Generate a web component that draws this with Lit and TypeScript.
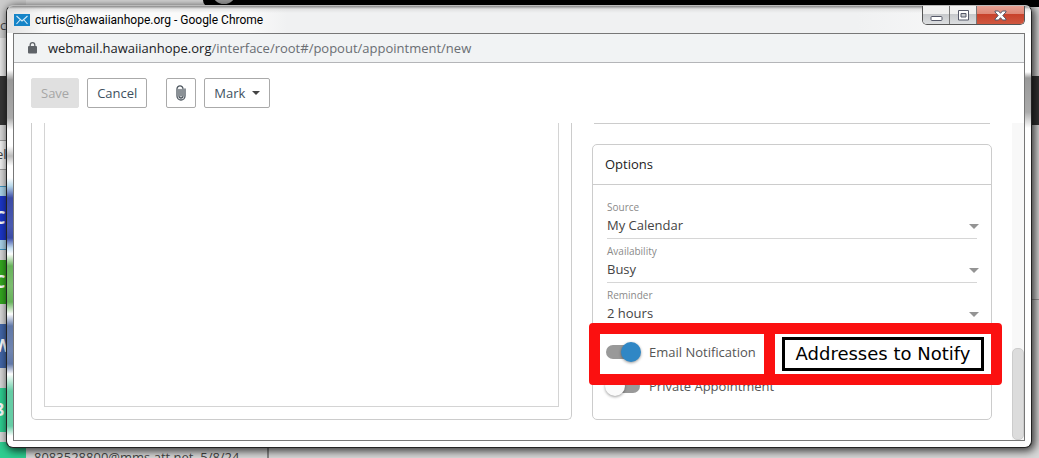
import { LitElement, html, css } from "lit";
import { customElement, property, state } from "lit/decorators.js";

const base = css`
  * {
    box-sizing: border-box;
  }
  button,
  select,
  input {
    font: inherit;
    color: inherit;
    margin: 0;
  }
`;

@customElement("select-field")
class SelectField extends LitElement {
  @property() label = "";
  @property({ type: Array }) options: string[] = [];

  static styles = [
    base,
    css`
      :host {
        display: block;
      }
      .label {
        display: block;
        font-size: 10px;
        line-height: 16px;
        color: #8a8a8a;
      }
      .control {
        display: grid;
        align-items: center;
        border-bottom: 1px solid #d6d6d6;
      }
      .select {
        grid-area: 1 / 1;
        appearance: none;
        width: 100%;
        height: 23px;
        padding: 0 0 4px;
        border: 0;
        border-radius: 0;
        background: none;
        font-size: 13px;
        color: #444;
        outline: none;
      }
      .arrow {
        grid-area: 1 / 1;
        justify-self: end;
        margin-right: -2px;
        pointer-events: none;
      }
    `,
  ];

  render() {
    return html`
      <label class="label" for="control">${this.label}</label>
      <div class="control">
        <select class="select" id="control">
          ${this.options.map((o) => html`<option>${o}</option>`)}
        </select>
        <svg class="arrow" width="10" height="5" viewBox="0 0 10 5" aria-hidden="true">
          <path d="M0 0h10L5 5z" fill="#949494" />
        </svg>
      </div>
    `;
  }
}

@customElement("toggle-row")
class ToggleRow extends LitElement {
  @property() label = "";
  @property({ type: Boolean }) on = false;

  static styles = [
    base,
    css`
      :host {
        display: block;
      }
      .row {
        display: flex;
        align-items: center;
        gap: 9px;
        height: 34px;
        font-size: 13px;
        color: #555;
      }
      .switch {
        appearance: none;
        position: relative;
        flex: none;
        width: 34px;
        height: 14px;
        border-radius: 7px;
        background: #999;
      }
      .switch::before {
        content: "";
        position: absolute;
        top: -3px;
        left: -1px;
        width: 20px;
        height: 20px;
        border-radius: 50%;
        background: #fafafa;
        box-shadow: 0 1px 3px rgba(0, 0, 0, 0.4);
      }
      .switch:checked::before {
        left: 15px;
        background: #3087c5;
      }
    `,
  ];

  render() {
    return html`
      <label class="row">
        <input
          class="switch"
          type="checkbox"
          role="switch"
          .checked=${this.on}
          @change=${(e: Event) => (this.on = (e.target as HTMLInputElement).checked)}
        />
        ${this.label}
      </label>
    `;
  }
}

@customElement("desktop-backdrop")
class DesktopBackdrop extends LitElement {
  static styles = [
    base,
    css`
      :host {
        display: block;
        overflow: hidden;
        background: #d8d8d8;
        font-size: 13px;
        color: #444;
      }
      .top {
        position: absolute;
        top: 0;
        left: 203px;
        right: 0;
        height: 7px;
        background: #000;
        border-bottom-left-radius: 7px;
      }
      .tab {
        position: absolute;
        top: -19px;
        left: 9px;
        width: 24px;
        height: 23px;
        border-radius: 50%;
        background: #999;
      }
      .band {
        position: absolute;
        top: 76px;
        left: 0;
        right: 0;
        height: 49px;
        background: #353535;
      }
      .rail {
        position: absolute;
        top: 0;
        left: 0;
        width: 26px;
      }
      .letter {
        height: 76px;
        padding-top: 16px;
        background: linear-gradient(#ccc 38px, #e6e6e6 38px);
      }
      .search {
        height: 30px;
        margin-top: 64px;
        border: solid #999;
        border-width: 1px 0;
        line-height: 27px;
        background: #f0f0f0;
        text-indent: -4px;
      }
      .list {
        display: grid;
        padding-top: 16px;
      }
      .cell {
        display: grid;
        align-items: center;
        height: 64px;
      }
      .cell.active {
        background: #a9d3ea;
        border: solid #3f94c0;
        border-width: 1px 0;
      }
      .avatar {
        height: 44px;
        line-height: 42px;
        font-size: 18px;
        font-weight: 700;
        color: #fff;
        text-indent: -6px;
      }
      .blue {
        background: #1c37c8;
      }
      .green {
        background: #34a820;
      }
      .slate {
        background: #4266a8;
      }
      .mint {
        background: #2dce90;
      }
      .contact {
        position: absolute;
        top: 447px;
        left: 34px;
        line-height: 20px;
        font-size: 13px;
      }
      .divider {
        position: absolute;
        top: 125px;
        bottom: 0;
        left: 267px;
        width: 2px;
        background: #888;
      }
      .rule {
        position: absolute;
        top: 299px;
        right: 0;
        width: 20px;
        height: 1px;
        background: #999;
      }
    `,
  ];

  render() {
    return html`
      <div class="band"></div>
      <div class="rail">
        <div class="letter">c</div>
        <div class="search">el</div>
        <div class="list">
          <div class="cell active"><div class="avatar blue">C</div></div>
          <div class="cell"><div class="avatar green">C</div></div>
          <div class="cell"><div class="avatar slate">W</div></div>
          <div class="cell"><div class="avatar mint">8</div></div>
          <div class="avatar mint"></div>
        </div>
      </div>
      <div class="contact">8083528800@mms.att.net, 5/8/24</div>
      <div class="divider"></div>
      <div class="rule"></div>
      <div class="top"><div class="tab"></div></div>
    `;
  }
}

@customElement("app-root")
class AppRoot extends LitElement {
  @state() private fields = [
    { label: "Source", options: ["My Calendar"] },
    { label: "Availability", options: ["Busy", "Free"] },
    { label: "Reminder", options: ["2 hours", "1 hour"] },
  ];

  static styles = [
    base,
    css`
      :host {
        display: block;
        font-family: "Open Sans", "Noto Sans", sans-serif;
      }
      .desktop {
        position: relative;
        display: flex;
        height: 100vh;
        padding: 5px 7px 10px 6px;
        overflow: hidden;
      }
      .backdrop {
        position: absolute;
        inset: 0;
      }
      .window {
        position: relative;
        flex: 1;
        min-width: 0;
        display: flex;
        flex-direction: column;
        padding: 0 6px 6px;
        border: 1px solid #222;
        border-top-color: #bbb;
        border-radius: 7px;
        box-shadow: 2px 2px 8px 1px rgba(0, 0, 0, 0.75);
        background:
          linear-gradient(#fff 64px, #999 74px, #aaa 112px, #fff 124px, #fff 140px, #bbb 150px, #fff 160px,
            #fff 172px, #b8d8ea 180px, #3b4ba6 192px, #4a5ab0 220px, #3b4ba6 232px, #c4dff0 242px, #fff 248px,
            #66b35a 260px, #7cbd70 280px, #66b35a 296px, #fff 308px, #6078a8 320px, #7085b0 345px, #6078a8 358px,
            #fff 368px, #65cda5 385px, #65cda5 420px, #fff 430px) left / 6px 100% no-repeat,
          linear-gradient(#fff 66px, #999 72px, #aaa 106px, #fff 122px) right / 6px 100% no-repeat,
          #fcfcfc;
      }
      .titlebar {
        display: flex;
        align-items: flex-start;
        justify-content: space-between;
        height: 27px;
        margin: 0 -6px;
        padding: 0 6px 0 7px;
        border-radius: 6px 6px 0 0;
        background:
          linear-gradient(#888, rgba(200, 200, 200, 0.4) 3px, transparent 7px),
          linear-gradient(90deg, #e2e2e2, #fafafa 40px, #fafafa 240px, #f0f1f2 280px, #f0f1f2 850px, #fcfcfc);
      }
      .title {
        display: flex;
        align-items: center;
        gap: 5px;
        height: 27px;
        font-family: Roboto, "Open Sans", sans-serif;
        font-size: 12px;
        color: #000;
        white-space: nowrap;
      }
      .captions {
        display: flex;
        border: 1px solid #555;
        border-top: 0;
        border-radius: 0 0 5px 5px;
        overflow: hidden;
      }
      .caption {
        display: grid;
        place-items: center;
        width: 27px;
        height: 18px;
        padding: 0;
        border: 0;
        border-right: 1px solid #777;
        background: linear-gradient(#f0f0f0 8px, #c6c8cb 8px, #dcdee0);
      }
      .caption.close {
        width: 47px;
        border-right: 0;
        background: linear-gradient(#e8a295, #df8877 8px, #c8402a 8px, #cf5840);
      }
      .client {
        flex: 1;
        min-height: 0;
        display: flex;
        flex-direction: column;
        border: 1px solid #777;
        background: #fff;
      }
      .address {
        display: flex;
        align-items: center;
        gap: 11px;
        flex: none;
        height: 29px;
        padding-left: 14px;
        border-bottom: 1px solid #b4b5b8;
        background: #f1f3f4;
        font-size: 13px;
        color: #6a6e73;
        white-space: nowrap;
      }
      .host {
        color: #202124;
      }
      .toolbar {
        display: flex;
        flex: none;
        gap: 8px;
        padding: 15px 17px;
      }
      .button {
        display: flex;
        align-items: center;
        justify-content: center;
        gap: 7px;
        height: 30px;
        padding: 0 9px;
        border: 1px solid #aaa;
        border-radius: 2px;
        background: #fff;
        font-size: 13px;
        color: #3e5060;
      }
      .button:disabled {
        border-color: #e0e0e0;
        background: #e0e0e0;
        color: #a6a6a6;
      }
      .button.icon {
        width: 30px;
        margin-left: 11px;
        padding: 0;
      }
      .scroller {
        flex: 1;
        min-height: 0;
        display: flex;
        overflow: hidden;
      }
      .columns {
        flex: 1;
        min-width: 0;
        display: grid;
        grid-template-columns: minmax(0, 541fr) minmax(0, 400fr);
        gap: 20px;
        padding: 0 20px 20px 17px;
      }
      .notes {
        display: grid;
        padding: 0 12px 12px;
        border: 1px solid #ccc;
        border-top: 0;
        border-radius: 0 0 5px 5px;
      }
      .editor {
        resize: none;
        width: 100%;
        border: 1px solid #d4d4d4;
        border-top: 0;
        outline: none;
        background: #fff;
      }
      .side {
        display: flex;
        flex-direction: column;
      }
      .previous {
        margin: 0 2px 20px;
        border-bottom: 1px solid #ccc;
      }
      .panel {
        position: relative;
        flex: 1;
        border: 1px solid #ccc;
        border-radius: 5px;
      }
      .heading {
        margin: 0;
        padding: 0 12px;
        border-bottom: 1px solid #ccc;
        font-size: 13px;
        font-weight: 400;
        line-height: 39px;
        color: #222;
      }
      .fields {
        display: grid;
        gap: 4px;
        padding: 14px 14px 8px;
      }
      .toggles {
        padding: 0 13px;
      }
      .callout {
        position: absolute;
        top: 178px;
        left: -4px;
        right: -11px;
        display: grid;
        grid-template-columns: 175fr 216fr;
        height: 62px;
        border: 11px solid #fb1010;
        border-radius: 4px;
        pointer-events: none;
      }
      .target {
        border-right: 11px solid #fb1010;
      }
      .addresses {
        display: grid;
        place-items: center;
        margin: 3px 7px;
        border: 3px solid #000;
        background: #fff;
        font-family: "DejaVu Sans", sans-serif;
        font-size: 18px;
        line-height: 24px;
        color: #000;
        white-space: nowrap;
      }
      .track {
        flex: none;
        display: flex;
        flex-direction: column;
        justify-content: flex-end;
        width: 12px;
        background: #f8f8f8;
      }
      .thumb {
        height: 29%;
        border: 1px solid #ccc;
        border-radius: 5px;
        background: #dcdcdc;
      }
    `,
  ];

  render() {
    return html`
      <div class="desktop">
        <desktop-backdrop class="backdrop"></desktop-backdrop>
        <div class="window">
          <header class="titlebar">
            <div class="title">
              <svg width="16" height="12" viewBox="0 0 16 12" aria-hidden="true">
                <path fill="#1584c8" d="M0 0h16v12H0z" />
                <path fill="none" stroke="#d5ebf8" stroke-width="1.1" d="M2.5 2 8 7l5.500-5M2.500 10l3.500-4M13.500 10 10 6" />
              </svg>
              curtis@hawaiianhope.org - Google Chrome
            </div>
            <div class="captions">
              <button class="caption" aria-label="Minimize">
                <svg width="13" height="11" viewBox="0 0 13 11">
                  <rect x="1" y="6.500" width="11" height="4" rx="1" fill="#fff" stroke="#555868" />
                </svg>
              </button>
              <button class="caption" aria-label="Maximize">
                <svg width="13" height="11" viewBox="0 0 13 11">
                  <path
                    fill="#fff"
                    fill-rule="evenodd"
                    stroke="#555868"
                    d="M1.500.5h10v9.500h-10zM4 3.500v3.500h5V3.500z"
                  />
                </svg>
              </button>
              <button class="caption close" aria-label="Close">
                <svg width="13" height="11" viewBox="0 0 13 11">
                  <path
                    fill="#fff"
                    stroke="#555868"
                    d="M1 1h3.500l2 2.300L8.500 1H12v1L8.800 5.500 12 9v1H8.500l-2-2.300-2 2.300H1V9l3.200-3.500L1 2z"
                  />
                </svg>
              </button>
            </div>
          </header>
          <main class="client">
            <div class="address">
              <svg width="9" height="12" viewBox="0 0 9 12" aria-hidden="true">
                <path fill="none" stroke="#5f6368" stroke-width="1.300" d="M2.200 5V3a2.300 2.300 0 0 1 4.600 0v2" />
                <rect y="4" width="9" height="7.500" rx="1" fill="#5f6368" />
              </svg>
              <div><span class="host">webmail.hawaiianhope.org</span>/interface/root#/popout/appointment/new</div>
            </div>
            <div class="toolbar">
              <button class="button" disabled>Save</button>
              <button class="button">Cancel</button>
              <button class="button icon" aria-label="Attach file">
                <svg width="10" height="16" viewBox="0 0 10 16">
                  <path
                    fill="none"
                    stroke="#4c555e"
                    stroke-width="1.300"
                    stroke-linecap="round"
                    d="M3 4.500v6.500a2 2 0 0 0 4 0V3.800a2.900 2.900 0 0 0-6 0V11a4 4 0 0 0 8 0V4M5 4.500V11"
                  />
                </svg>
              </button>
              <button class="button">
                Mark
                <svg width="8" height="4" viewBox="0 0 8 4" aria-hidden="true">
                  <path d="M0 0h8L4 4z" fill="#444" />
                </svg>
              </button>
            </div>
            <div class="scroller">
              <div class="columns">
                <section class="notes"><textarea class="editor" aria-label="Description"></textarea></section>
                <div class="side">
                  <div class="previous"></div>
                  <section class="panel">
                    <h2 class="heading">Options</h2>
                    <div class="fields">
                      ${this.fields.map(
                        (f) => html`<select-field .label=${f.label} .options=${f.options}></select-field>`,
                      )}
                    </div>
                    <div class="toggles">
                      <toggle-row label="Email Notification" on></toggle-row>
                      <toggle-row label="Private Appointment"></toggle-row>
                    </div>
                    <div class="callout">
                      <div class="target"></div>
                      <div class="addresses">Addresses to Notify</div>
                    </div>
                  </section>
                </div>
              </div>
              <div class="track"><div class="thumb"></div></div>
            </div>
          </main>
        </div>
      </div>
    `;
  }
}
